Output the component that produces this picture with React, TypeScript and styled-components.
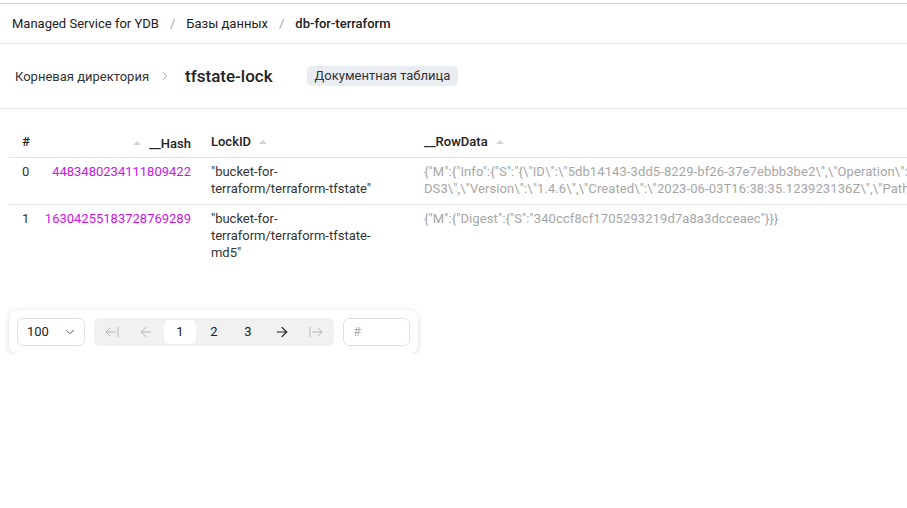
import React from "react";
import styled, { createGlobalStyle } from "styled-components";
import { ArrowLeftFromLine, ArrowLeft, ArrowRight, ArrowRightFromLine, ChevronDown, ChevronRight } from "lucide-react";

const Global = createGlobalStyle`
  html, body { margin: 0; padding: 0; background: #fff; }
  body {
    font-family: Roboto, "Noto Sans", sans-serif;
    color: #2b2b2b;
    overflow: hidden;
    width: 907px;
  }
`;

const Page = styled.div`
  display: flex;
  flex-direction: column;
  padding-top: 3px;
`;

const Crumbs = styled.nav`
  display: flex;
  align-items: center;
  height: 39px;
  padding-left: 12px;
  border-top: 1px solid #d4d4d4;
  border-bottom: 1px solid #e6e6e6;
  font-size: 13px;
  gap: 11px;
`;

const Crumb = styled.span<{ $current?: boolean }>`
  color: #222;
  font-weight: ${(p) => (p.$current ? 500 : 400)};
`;

const Slash = styled.span`
  color: #a8a8a8;
`;

const Header = styled.header`
  display: flex;
  align-items: center;
  height: 64px;
  padding-left: 15px;
  border-bottom: 1px solid #e6e6e6;
`;

const Parent = styled.span`
  font-size: 13px;
  color: #333;
`;

const Sep = styled.span`
  display: flex;
  color: #999;
  margin: 0 13px 0 9px;
`;

const Title = styled.h1`
  margin: 0;
  font-size: 17px;
  font-weight: 500;
  color: #222;
`;

const Badge = styled.span`
  margin-left: 34px;
  background: #e9edf2;
  border-radius: 5px;
  padding: 0 8px;
  height: 20px;
  line-height: 20px;
  font-size: 13px;
  color: #333;
`;

const Content = styled.section`
  padding: 18px 0 0 9px;
`;

const Table = styled.table`
  border-collapse: collapse;
  font-size: 13px;
  line-height: 17px;
`;

type Align = "left" | "right";

const padLeft = (first?: boolean, align?: Align) => (first ? 13 : align === "right" ? 5 : 10);

const Th = styled.th<{ $align?: Align; $w?: number; $first?: boolean }>`
  text-align: ${(p) => p.$align || "left"};
  font-weight: 500;
  color: #222;
  padding: 5px 10px 5px ${(p) => padLeft(p.$first, p.$align)}px;
  height: 17px;
  border-bottom: 1px solid #e0e0e0;
  white-space: nowrap;
  ${(p) => (p.$w ? `width: ${p.$w}px;` : "")}
`;

const HeadInner = styled.span`
  display: inline-flex;
  align-items: center;
  gap: 8px;
`;

const SortMark = styled.span`
  display: inline-block;
  width: 0;
  height: 0;
  border-left: 4px solid transparent;
  border-right: 4px solid transparent;
  border-bottom: 4px solid #d3d3d3;
`;

const Row = styled.tr`
  &:last-child td {
    border-bottom: none;
  }
`;

const Td = styled.td<{ $align?: Align; $tone?: "hash" | "muted" | "plain"; $first?: boolean }>`
  vertical-align: top;
  text-align: ${(p) => p.$align || "left"};
  padding: 5px 10px 7px ${(p) => padLeft(p.$first, p.$align)}px;
  border-bottom: 1px solid #e6e6e6;
  white-space: ${(p) => (p.$tone === "hash" ? "nowrap" : "normal")};
  color: ${(p) => (p.$tone === "hash" ? "#cc14e6" : p.$tone === "muted" ? "#a6a6a6" : "#333")};
`;

const Wrap = styled.div`
  width: 180px;
  padding-right: 13px;
  overflow-wrap: break-word;
`;

const Line = styled.div`
  white-space: nowrap;
  letter-spacing: 0.1px;
`;

const PagerCard = styled.div`
  display: flex;
  align-items: center;
  gap: 9px;
  width: fit-content;
  margin: 42px 0 0 0;
  padding: 8px;
  border-radius: 9px;
  background: #fff;
  box-shadow: 0 1px 6px rgba(0, 0, 0, 0.14);
`;

const Select = styled.div`
  box-sizing: border-box;
  display: flex;
  align-items: center;
  justify-content: space-between;
  width: 68px;
  height: 28px;
  padding: 0 7px 0 9px;
  border: 1px solid #e0e0e0;
  border-radius: 6px;
  font-size: 13px;
  color: #222;
`;

const Pager = styled.div`
  display: flex;
  align-items: center;
  height: 28px;
  padding: 0 1px;
  background: #f1f1f1;
  border-radius: 6px;
`;

const PageBtn = styled.span<{ $active?: boolean; $disabled?: boolean }>`
  display: flex;
  align-items: center;
  justify-content: center;
  width: 32px;
  height: 24px;
  margin: 0 1px;
  border-radius: 5px;
  font-size: 13px;
  background: ${(p) => (p.$active ? "#fff" : "transparent")};
  color: ${(p) => (p.$disabled ? "#b5b5b5" : "#222")};
`;

const Input = styled.div`
  box-sizing: border-box;
  display: flex;
  align-items: center;
  width: 67px;
  height: 28px;
  padding-left: 9px;
  border: 1px solid #e0e0e0;
  border-radius: 6px;
  font-size: 13px;
  color: #b0b0b0;
`;

const rows = [
  {
    n: "0",
    hash: "4483480234111809422",
    lock: "\"bucket-for-terraform/terraform-tfstate\"",
    data: [
      '{"M":{"Info":{"S":"{\\"ID\\":\\"5db14143-3dd5-8229-bf26-37e7ebbb3be2\\",\\"Operation\\":\\"OperationTypeApply\\",\\"Info\\":\\"\\",\\"Who\\":\\"user@DESKTOP-',
      'DS3\\",\\"Version\\":\\"1.4.6\\",\\"Created\\":\\"2023-06-03T16:38:35.123923136Z\\",\\"Path\\":\\"\\"}"}}}',
    ],
  },
  {
    n: "1",
    hash: "16304255183728769289",
    lock: "\"bucket-for-terraform/terraform-tfstate-md5\"",
    data: ['{"M":{"Digest":{"S":"340ccf8cf1705293219d7a8a3dcceaec"}}}'],
  },
];

export default function App() {
  return (
    <Page>
      <Global />
      <Crumbs>
        <Crumb>Managed Service for YDB</Crumb>
        <Slash>/</Slash>
        <Crumb>Базы данных</Crumb>
        <Slash>/</Slash>
        <Crumb $current>db-for-terraform</Crumb>
      </Crumbs>
      <Header>
        <Parent>Корневая директория</Parent>
        <Sep>
          <ChevronRight size={14} strokeWidth={1.5} />
        </Sep>
        <Title>tfstate-lock</Title>
        <Badge>Документная таблица</Badge>
      </Header>
      <Content>
        <Table>
          <thead>
            <tr>
              <Th $first $w={11}>#</Th>
              <Th $align="right" $w={146}>
                <HeadInner>
                  <SortMark />
                  __Hash
                </HeadInner>
              </Th>
              <Th $w={193}>
                <HeadInner>
                  LockID
                  <SortMark />
                </HeadInner>
              </Th>
              <Th>
                <HeadInner>
                  __RowData
                  <SortMark />
                </HeadInner>
              </Th>
            </tr>
          </thead>
          <tbody>
            {rows.map((r) => (
              <Row key={r.n}>
                <Td $first>{r.n}</Td>
                <Td $align="right" $tone="hash">
                  {r.hash}
                </Td>
                <Td>
                  <Wrap>{r.lock}</Wrap>
                </Td>
                <Td $tone="muted">
                  {r.data.map((l, i) => (
                    <Line key={i}>{l}</Line>
                  ))}
                </Td>
              </Row>
            ))}
          </tbody>
        </Table>
        <PagerCard>
          <Select>
            <span>100</span>
            <ChevronDown size={14} strokeWidth={1.3} />
          </Select>
          <Pager>
            <PageBtn $disabled>
              <ArrowLeftFromLine size={16} strokeWidth={1.5} />
            </PageBtn>
            <PageBtn $disabled>
              <ArrowLeft size={16} strokeWidth={1.5} />
            </PageBtn>
            <PageBtn $active>1</PageBtn>
            <PageBtn>2</PageBtn>
            <PageBtn>3</PageBtn>
            <PageBtn>
              <ArrowRight size={16} strokeWidth={1.8} />
            </PageBtn>
            <PageBtn $disabled>
              <ArrowRightFromLine size={16} strokeWidth={1.5} />
            </PageBtn>
          </Pager>
          <Input>#</Input>
        </PagerCard>
      </Content>
    </Page>
  );
}
